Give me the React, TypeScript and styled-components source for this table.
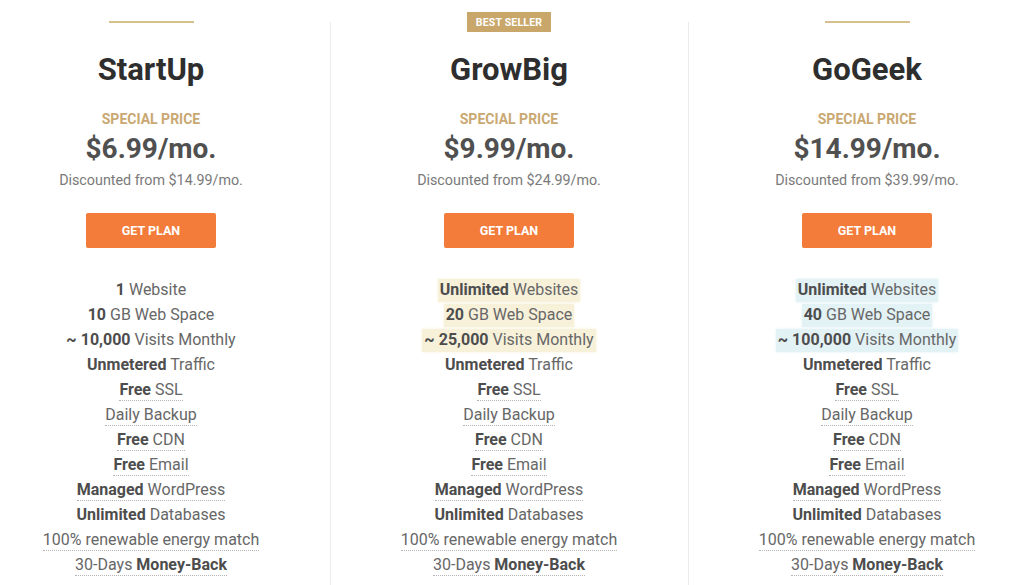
import React from "react";
import styled, { createGlobalStyle } from "styled-components";

const Global = createGlobalStyle`
  html, body { margin: 0; padding: 0; background: #ffffff; overflow: hidden; }
  body { font-family: Roboto, "Liberation Sans", Arial, sans-serif; }
`;

const Page = styled.div`
  width: 1024px;
  height: 585px;
  overflow: hidden;
  background: #fff;
`;

const Grid = styled.div`
  width: 1074px;
  margin-left: -28px;
  display: grid;
  grid-template-columns: repeat(3, 1fr);
`;

const Column = styled.div<{ $divider?: boolean }>`
  position: relative;
  display: flex;
  flex-direction: column;
  align-items: center;
  height: 585px;
  &::before {
    content: "";
    display: ${(p) => (p.$divider ? "block" : "none")};
    position: absolute;
    left: 0;
    top: 22px;
    bottom: 0;
    width: 1px;
    background: #ececec;
  }
`;

const TopSlot = styled.div`
  height: 34px;
  display: flex;
  flex-direction: column;
  align-items: center;
`;

const GoldLine = styled.div`
  margin-top: 21px;
  width: 85px;
  height: 2px;
  background: #d8bf8e;
`;

const Badge = styled.div`
  margin-top: 12px;
  height: 20px;
  padding: 0 9px;
  display: flex;
  align-items: center;
  background: #c9a76b;
  color: #fff;
  font-size: 10.5px;
  font-weight: 700;
  letter-spacing: 0.2px;
`;

const Title = styled.h2`
  margin: 16px 0 0;
  font-size: 31px;
  line-height: 40px;
  font-weight: 700;
  color: #2e2e2e;
`;

const Special = styled.div`
  margin-top: 19px;
  font-size: 14px;
  line-height: 20px;
  font-weight: 700;
  color: #c9a872;
`;

const Price = styled.div`
  margin-top: 4px;
  font-size: 28px;
  line-height: 32px;
  font-weight: 700;
  color: #505050;
`;

const Discount = styled.div`
  margin-top: 5px;
  font-size: 14.3px;
  line-height: 20px;
  color: #7a7a7a;
`;

const Button = styled.button`
  margin-top: 23px;
  width: 130px;
  height: 35px;
  border: none;
  border-radius: 2px;
  background: #f47c3a;
  color: #fff;
  font-family: inherit;
  font-size: 12.5px;
  font-weight: 700;
  cursor: pointer;
`;

const Features = styled.ul`
  list-style: none;
  margin: 30px 0 0;
  padding: 0;
  display: flex;
  flex-direction: column;
  align-items: center;
`;

const FeatureRow = styled.li`
  height: 25px;
  display: flex;
  align-items: center;
  justify-content: center;
`;

const FeatureText = styled.span<{ $dotted?: boolean; $hl?: string }>`
  display: inline-block;
  font-size: 16px;
  line-height: 20px;
  color: #676767;
  padding: ${(p) => (p.$hl ? "1px 2px" : "0")};
  background: ${(p) => p.$hl || "transparent"};
  box-shadow: ${(p) => (p.$hl ? `0 0 3px ${p.$hl}` : "none")};
  border-bottom: 1px ${(p) => (p.$dotted ? "dotted #b5b5b5" : "solid transparent")};
  white-space: nowrap;
  b {
    font-weight: 700;
    color: #4d4d4d;
  }
`;

type Feature = { parts: [string, boolean][]; dotted?: boolean; hl?: boolean };

const common = (): Feature[] => [
  { parts: [["Unmetered", true], [" Traffic", false]] },
  { parts: [["Free", true], [" SSL", false]], dotted: true },
  { parts: [["Daily Backup", false]], dotted: true },
  { parts: [["Free", true], [" CDN", false]], dotted: true },
  { parts: [["Free", true], [" Email", false]], dotted: true },
  { parts: [["Managed", true], [" WordPress", false]], dotted: true },
  { parts: [["Unlimited", true], [" Databases", false]] },
  { parts: [["100% renewable energy match", false]], dotted: true },
  { parts: [["30-Days ", false], ["Money-Back", true]], dotted: true },
];

type Plan = {
  name: string;
  best?: boolean;
  price: string;
  from: string;
  hl?: string;
  features: Feature[];
};

const plans: Plan[] = [
  {
    name: "StartUp",
    price: "$6.99/mo.",
    from: "Discounted from $14.99/mo.",
    features: [
      { parts: [["1", true], [" Website", false]] },
      { parts: [["10", true], [" GB Web Space", false]] },
      { parts: [["~ 10,000", true], [" Visits Monthly", false]] },
      ...common(),
    ],
  },
  {
    name: "GrowBig",
    best: true,
    price: "$9.99/mo.",
    from: "Discounted from $24.99/mo.",
    hl: "#f7f1da",
    features: [
      { parts: [["Unlimited", true], [" Websites", false]], hl: true },
      { parts: [["20", true], [" GB Web Space", false]], hl: true },
      { parts: [["~ 25,000", true], [" Visits Monthly", false]], hl: true },
      ...common(),
    ],
  },
  {
    name: "GoGeek",
    price: "$14.99/mo.",
    from: "Discounted from $39.99/mo.",
    hl: "#e3f2f5",
    features: [
      { parts: [["Unlimited", true], [" Websites", false]], hl: true },
      { parts: [["40", true], [" GB Web Space", false]], hl: true },
      { parts: [["~ 100,000", true], [" Visits Monthly", false]], hl: true },
      ...common(),
    ],
  },
];

export default function App() {
  return (
    <Page>
      <Global />
      <Grid>
        {plans.map((plan, i) => (
          <Column key={plan.name} $divider={i > 0}>
            <TopSlot>{plan.best ? <Badge>BEST SELLER</Badge> : <GoldLine />}</TopSlot>
            <Title>{plan.name}</Title>
            <Special>SPECIAL PRICE</Special>
            <Price>{plan.price}</Price>
            <Discount>{plan.from}</Discount>
            <Button>GET PLAN</Button>
            <Features>
              {plan.features.map((f, j) => (
                <FeatureRow key={j}>
                  <FeatureText $dotted={f.dotted} $hl={f.hl ? plan.hl : undefined}>
                    {f.parts.map(([t, b], k) => (b ? <b key={k}>{t}</b> : <span key={k}>{t}</span>))}
                  </FeatureText>
                </FeatureRow>
              ))}
            </Features>
          </Column>
        ))}
      </Grid>
    </Page>
  );
}
